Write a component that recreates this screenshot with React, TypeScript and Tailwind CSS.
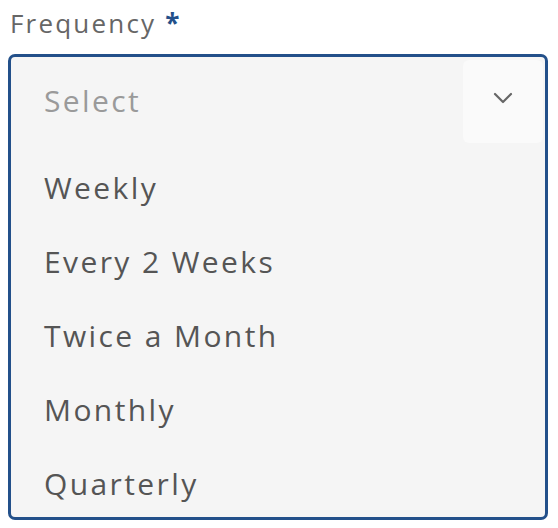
import React from "react";

const options = ["Weekly", "Every 2 Weeks", "Twice a Month", "Monthly", "Quarterly"];

export default function App() {
  return (
    <div
      className="w-[558px] h-[528px] bg-white overflow-hidden"
      style={{ fontFamily: '"Open Sans", "Liberation Sans", sans-serif' }}
    >
      <div className="pl-[10px] pt-[6px] h-[54px] text-[26px] leading-[34px] tracking-[2.2px] text-[#666666] font-medium">
        Frequency <span className="text-[#23508a] font-bold">*</span>
      </div>
      <div className="ml-[8px] w-[540px] h-[466px] border-[3px] border-[#23508a] rounded-[7px] bg-[#f5f5f5] overflow-hidden flex flex-col">
        <div className="h-[86px] flex items-start shrink-0">
          <div className="flex-1 h-[86px] flex items-center pl-[33px] text-[30px] tracking-[2.4px] text-[#9a9a9a]">
            Select
          </div>
          <div className="mt-[3px] mr-[2px] w-[80px] h-[83px] rounded-[6px] bg-[#fafafa] flex items-center justify-center">
            <svg className="mb-[7px]" width="20" height="12" viewBox="0 0 20 12" fill="none">
              <path d="M2 2 L10 10 L18 2" stroke="#666666" strokeWidth="2.2" strokeLinecap="round" strokeLinejoin="round" />
            </svg>
          </div>
        </div>
        <div className="pt-[7px] flex flex-col">
          {options.map((o) => (
            <div key={o} className="h-[74px] shrink-0 flex items-center pl-[33px] text-[30px] tracking-[2.4px] text-[#555555]">
              {o}
            </div>
          ))}
        </div>
      </div>
    </div>
  );
}
